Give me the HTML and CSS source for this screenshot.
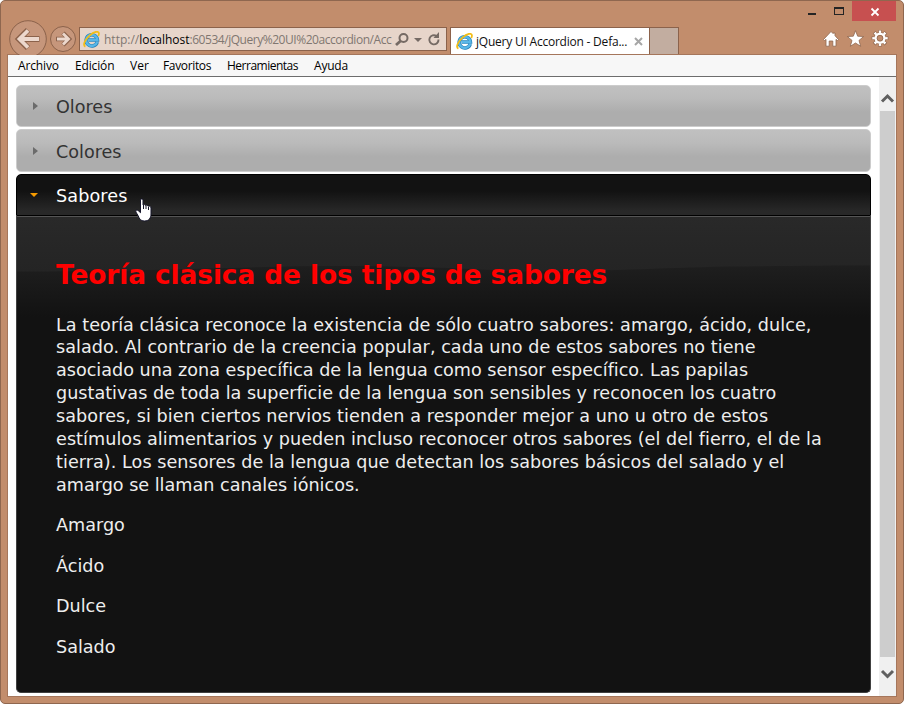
FILE: index.html
```html
<!DOCTYPE html>
<html lang="es">
<head>
<meta charset="utf-8">
<title>jQuery UI Accordion</title>
<link rel="stylesheet" href="styles.css">
</head>
<body>
<svg width="0" height="0" class="defs">
  <symbol id="ie" viewBox="0 0 17 17">
    <path d="M14.2 10.9A5.6 5.6 0 1 1 14.4 9H5.6" fill="none" stroke="#2680b8" stroke-width="3.6"/>
    <path d="M14.2 10.9A5.6 5.6 0 1 1 14.4 9H5.6" fill="none" stroke="#58b7e8" stroke-width="2.3"/>
    <path d="M2.4 15.6C-.6 14.200 2 8.500 6.500 4.600S15.700-.400 15.900 2.300c.1.900-.2 1.800-.7 2.700" fill="none" stroke="#f3bd16" stroke-width="1.800"/>
  </symbol>
</svg>
<div class="window">
  <header class="chrome">
    <div class="nav">
      <svg class="arrows" width="80" height="37" viewBox="0 0 80 37">
        <g fill="none" stroke="#8b624b">
          <circle cx="28" cy="21" r="18.300" fill="#c6967b"/>
          <circle cx="63" cy="21" r="12.500" fill="#c6967b"/>
          <path d="M39.500 21H20M28 12l-9 9 9 9" stroke-width="6"/>
          <path d="M56 21h12M63 15l6 6-6 6" stroke-width="4.500"/>
        </g>
        <g fill="none" stroke="#ecd8cd">
          <path d="M39 21H20M28 12.500L19.500 21l8.500 8.500" stroke-width="3.800"/>
          <path d="M57 21h11M63 15.500l5.500 5.500-5.500 5.500" stroke-width="2.800"/>
        </g>
      </svg>
      <div class="address">
        <svg class="ie" width="17" height="17"><use href="#ie"/></svg>
        <div class="url"><span class="u1">http://</span><span class="u2">localhost</span><span class="u3">:60534/jQuery%20UI%20accordion/Acc</span></div>
        <svg class="tools" width="50" height="20" viewBox="0 0 50 20" fill="none" stroke="#756a64">
          <circle cx="9.500" cy="9" r="4" stroke-width="2"/><path d="M6.500 12l-4.500 4" stroke-width="2.800"/>
          <path d="M20 9h8l-4 4z" fill="#756a64" stroke="none"/>
          <path d="M44.500 10.500a4.600 4.600 0 1 1-2-3.500" stroke-width="1.900"/><path d="M45 3v6h-5.500z" fill="#756a64" stroke="none"/>
        </svg>
      </div>
      <div class="tab">
        <svg class="ie" width="17" height="17"><use href="#ie"/></svg>
        <span class="tab-title">jQuery UI Accordion - Defa...</span>
        <svg width="9" height="9" viewBox="0 0 9 9" stroke="#a6a6a6" stroke-width="2"><path d="M1 1l7 7M8 1L1 8"/></svg>
      </div>
      <div class="newtab"></div>
    </div>
    <div class="right">
      <svg class="caption" width="92" height="20" viewBox="0 0 92 20">
        <path d="M4 12h8v2H4z" fill="#242424"/>
        <path d="M30 6h10v8H30zm1 2v5h8V8z" fill="#242424" fill-rule="evenodd"/>
        <path d="M48 0h45v20H48z" fill="#c75050"/>
        <path d="M67.500 7.500l7 7M74.500 7.500l-7 7" stroke="#fff" stroke-width="1.800"/>
      </svg>
      <svg class="commands" width="66" height="18" viewBox="0 0 66 18" fill="#fff" stroke="#8f674f" stroke-width=".8">
        <path d="M.5 9.500L8 1.500l2 2V3h2v2.700l3.500 3.800-1 1L13 9.400V16.200H9.800V11H6.200v5.200H3V9.400L1.500 10.500z"/>
        <path d="M32.500 .7l2.200 5.500 6 .300-4.700 3.900 1.700 5.900-5.200-3.300-5.200 3.300 1.700-5.900L24.300 6.500l6-.300z"/>
        <circle cx="57" cy="8.200" r="6.500" pathLength="16" fill="none" stroke="#8f674f" stroke-width="3.800" stroke-dasharray="1.200 .8" stroke-dashoffset=".6"/>
        <circle cx="57" cy="8.200" r="5.300" fill="none" stroke="#8f674f" stroke-width="1.800"/>
        <circle cx="57" cy="8.200" r="6.400" pathLength="16" fill="none" stroke="#fff" stroke-width="2.600" stroke-dasharray=".9 1.100" stroke-dashoffset=".45"/>
        <circle cx="57" cy="8.200" r="4.400" fill="none" stroke="#fff" stroke-width="2.500"/>
        <circle cx="57" cy="8.200" r="2.900" fill="none"/>
      </svg>
    </div>
  </header>
  <div class="client">
    <nav class="menu"><span class="m1">Archivo</span><span class="m2">Edición</span><span class="m3">Ver</span><span class="m4">Favoritos</span><span class="m5">Herramientas</span><span class="m6">Ayuda</span></nav>
    <div class="view">
      <main class="accordion">
        <h3 class="head"><i class="closed"></i><span>Olores</span></h3>
        <h3 class="head second"><i class="closed"></i><span>Colores</span></h3>
        <h3 class="head active"><i class="open"></i><span>Sabores</span>
          <svg class="hand" width="18" height="24" viewBox="0 0 18 24"><path d="M5.500 2c0-1.500 2.500-1.500 2.500 0v5c1-.8 2.300-.4 2.500.5 1-.6 2.200-.3 2.500.7 1.200-.5 3 0 3 1.800v6c0 4-2 7-6.500 7-4 0-5-2-6.500-5.500L.9 14c-.6-1.700 1-2.600 2.400-1.300l2.200 2z" fill="#fff" stroke="#15152a"/><path d="M8.500 7v4M11 8v3M13.500 9v3" stroke="#15152a"/></svg>
        </h3>
        <section class="panel">
          <svg class="wave" width="853" height="100" viewBox="0 0 853 100">
            <defs>
              <linearGradient id="base" x1="0" y1="0" x2="0" y2="1"><stop offset="0" stop-color="#2a2a2a"/><stop offset=".5" stop-color="#1e1e1e"/><stop offset="1" stop-color="#121212"/></linearGradient>
              <linearGradient id="gloss" gradientUnits="userSpaceOnUse" x1="0" y1="0" x2="0" y2="55"><stop offset="0" stop-color="#292929"/><stop offset="1" stop-color="#242424"/></linearGradient>
            </defs>
            <path d="M0 0h853v100H0z" fill="url(#base)"/>
            <path d="M0 0V54.500C90 54.500 130 53 210 51C310 48 390 48 500 54.500C590 54.500 640 51 710 49.500C770 49 810 48.500 853 48.500V0z" fill="url(#gloss)"/>
          </svg>
          <h2><span class="t0">Teoría clásica de los tipos de sabores</span></h2>
          <p class="body"><span class="t1">La teoría clásica reconoce la existencia de sólo cuatro sabores: amargo, ácido, dulce,</span><br>
          <span class="t2">salado. Al contrario de la creencia popular, cada uno de estos sabores no tiene</span><br>
          <span class="t3">asociado una zona específica de la lengua como sensor específico. Las papilas</span><br>
          <span class="t4">gustativas de toda la superficie de la lengua son sensibles y reconocen los cuatro</span><br>
          <span class="t5">sabores, si bien ciertos nervios tienden a responder mejor a uno u otro de estos</span><br>
          <span class="t6">estímulos alimentarios y pueden incluso reconocer otros sabores (el del fierro, el de la</span><br>
          <span class="t7">tierra). Los sensores de la lengua que detectan los sabores básicos del salado y el</span><br>
          <span class="t8">amargo se llaman canales iónicos.</span></p>
          <p>Amargo</p>
          <p>Ácido</p>
          <p>Dulce</p>
          <p>Salado</p>
        </section>
      </main>
      <aside class="scroll">
        <svg width="17" height="34" viewBox="0 0 17 34"><path d="M3 24.500l5.500-5.500 5.500 5.500" fill="none" stroke="#606060" stroke-width="3"/></svg>
        <div class="thumb"></div>
        <svg width="17" height="39" viewBox="0 0 17 39"><path d="M3 14l5.500 5.500L14 14" fill="none" stroke="#606060" stroke-width="3"/></svg>
      </aside>
    </div>
  </div>
</div>
</body>
</html>
```
FILE: styles.css
```css
* { box-sizing: border-box; }
html, body { margin: 0; height: 704px; overflow: hidden; background: #fff; }
.defs { position: absolute; }
.window { width: 904px; height: 704px; border: 1px solid #8f674f; border-radius: 5px; background: #c28d6c; padding: 0 6px 6px; }
.chrome { height: 53px; display: flex; justify-content: space-between; }
.nav { display: flex; align-items: flex-start; padding-top: 17px; margin-left: -7px; }
.arrows { flex: none; }
.nav .address { margin-top: 9px; }
.address { width: 368px; height: 24px; margin-left: -1px; border: 1px solid #8b624b; background: #e7d5ca; display: flex; align-items: center; padding-left: 3px; font: 12px "Open Sans", "Noto Sans", sans-serif; color: #807771; }
.ie { flex: none; }
.url { width: 290px; margin-left: 4px; white-space: nowrap; display: flex; }
.u2 { color: #000; }
.u3 { letter-spacing: -.46px; }
.tools { margin-left: 0; flex: none; }
.tab { width: 200px; height: 27px; margin: 9px 0 0 3px; border: 1px solid #8b624b; border-bottom: 0; background: #fff; display: flex; align-items: center; padding-left: 5px; font: 12px "Open Sans", "Noto Sans", sans-serif; color: #111; }
.tab-title { width: 158px; margin-left: 3px; white-space: nowrap; letter-spacing: -.22px; }
.newtab { width: 29px; height: 27px; margin-top: 9px; border: 1px solid #8b624b; border-width: 1px 1px 0 0; background: #c2ada0; }
.right { width: 92px; margin-right: 1px; display: flex; flex-direction: column; }
.caption { display: block; }
.commands { margin: 9px 0 0 19px; }
.client { height: 643px; border: 1px solid #a5765b; background: #fff; }
.menu { height: 22px; background: #f7f7f7; border-bottom: 1px solid #6d6d6d; display: flex; align-items: center; padding-left: 10px; font: 12px "Open Sans", "Noto Sans", sans-serif; color: #000; white-space: nowrap; }
.menu span { flex: none; }
.m1 { width: 57px; letter-spacing: -.15px; }
.m2 { width: 55px; letter-spacing: -.15px; }
.m3 { width: 33px; }
.m4 { width: 64px; letter-spacing: -.35px; }
.m5 { width: 87px; letter-spacing: -.5px; }
.m6 { letter-spacing: -.2px; }
.view { display: flex; height: 619px; }
.accordion { width: 855px; margin: 8px 0 0 8px; font: 17.6px/22.88px "DejaVu Sans", sans-serif; color: #eee; }
.head { position: relative; margin: 0; height: 42px; border: 1px solid #ccc; border-radius: 5px; background: linear-gradient(#c0c0c0, #bbb 30%, #adadad 65%, #adadad); font: inherit; color: #333; display: flex; align-items: center; padding: 2px 0 0 16px; }
.second { margin-top: 2px; height: 43px; padding-top: 3px; }
.active { margin-top: 2px; height: 42px; border-color: #000; border-radius: 5px 5px 0 0; background: linear-gradient(#121212 40%, #282828 90%); color: #fff; letter-spacing: .1px; }
.head i { width: 23px; height: 10px; display: block; }
.head i::before { content: ""; display: block; width: 0; height: 0; border: 4px solid transparent; }
.head .closed::before { border-left: 5px solid #6b6b6b; border-right: 0; }
.head .open { width: 26px; height: 6px; margin-left: -3px; }
.head .open::before { border-top: 4px solid #f59a00; border-bottom: 0; }
.hand { position: absolute; left: 118px; top: 23px; z-index: 2; }
.panel { position: relative; height: 477px; border: 1px solid #404040; border-top-color: #555; border-radius: 0 0 5px 5px; background: #121212; padding: 41px 39px 0; }
.wave { position: absolute; left: 0; top: 0; }
.panel h2 { position: relative; margin: 0; font-size: 26.4px; line-height: 34px; color: #f00; white-space: nowrap; }
.panel p { position: relative; margin: 17.6px 0; white-space: nowrap; }
.panel .body { margin-top: 21.5px; }
.t0 { letter-spacing: -.08px; }
.t1 { letter-spacing: .04px; }
.t2 { letter-spacing: .04px; }
.t3 { letter-spacing: -.01px; }
.t5 { letter-spacing: .085px; }
.t6 { letter-spacing: .052px; }
.t7 { letter-spacing: .048px; }
.scroll { width: 17px; margin-left: 8px; background: #f0f0f0; }
.scroll svg { display: block; }
.thumb { height: 546px; margin: 0 1px; background: #cdcdcd; }
```
